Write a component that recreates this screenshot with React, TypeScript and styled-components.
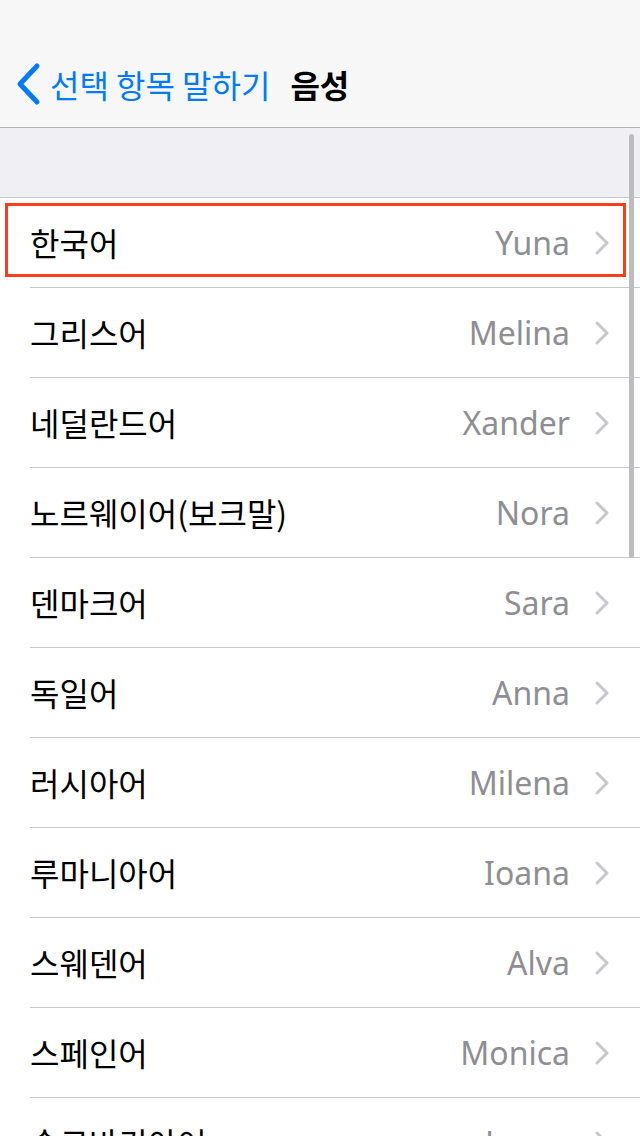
import React from "react";
import styled, { createGlobalStyle } from "styled-components";

const Global = createGlobalStyle`
  html, body { margin: 0; padding: 0; background: #ffffff; }
  body { width: 640px; height: 1136px; overflow: hidden; font-family: "Noto Sans", "Noto Sans CJK KR", sans-serif; }
  #root { width: 640px; height: 1136px; }
`;

const Screen = styled.div`
  position: relative;
  width: 640px;
  height: 1136px;
  overflow: hidden;
  background: #ffffff;
`;

const NavBar = styled.header`
  height: 128px;
  box-sizing: border-box;
  padding-top: 40px;
  background: #f7f7f7;
  border-bottom: 1px solid #b2b2b2;
  display: flex;
  align-items: center;
`;

const BackButton = styled.div`
  display: flex;
  align-items: center;
  padding-left: 16px;
  gap: 8px;
  color: #007aff;
  font-family: "Noto Sans CJK KR", sans-serif;
  font-size: 32px;
  height: 88px;
`;

const Title = styled.div`
  margin-left: 20px;
  font-family: "Noto Sans CJK KR", sans-serif;
  font-size: 32px;
  font-weight: 700;
  color: #000;
`;

const SectionHeader = styled.div`
  height: 69px;
  background: #efeff4;
  border-bottom: 1px solid #c8c7cc;
`;

const List = styled.div`
  display: flex;
  flex-direction: column;
`;

const Row = styled.div`
  position: relative;
  height: 90px;
  display: flex;
  align-items: center;
  padding-left: 30px;
  padding-right: 30px;
  box-sizing: border-box;
  &::after {
    content: "";
    position: absolute;
    left: 30px;
    right: 0;
    bottom: 0;
    height: 1px;
    background: #c8c7cc;
  }
`;

const Label = styled.div`
  flex: 1;
  font-family: "Noto Sans CJK KR", sans-serif;
  font-size: 32px;
  color: #000;
  margin-top: -2px;
  white-space: nowrap;
`;

const Value = styled.div`
  font-family: "Noto Sans", sans-serif;
  font-size: 32px;
  color: #8e8e93;
  margin-right: 24px;
  margin-top: -2px;
`;

const Highlight = styled.div`
  position: absolute;
  left: 5px;
  top: 203px;
  width: 621px;
  height: 74px;
  box-sizing: border-box;
  border: 3px solid #ff3b1e;
  pointer-events: none;
`;

const ScrollBar = styled.div`
  position: absolute;
  left: 629px;
  top: 134px;
  width: 5px;
  height: 424px;
  border-radius: 3px;
  background: #bdbdc0;
`;

const Chevron = () => (
  <svg width="16" height="26" viewBox="0 0 16 26">
    <path d="M3 3 L13 13 L3 23" fill="none" stroke="#c7c7cc" strokeWidth="3" strokeLinecap="round" strokeLinejoin="round" />
  </svg>
);

const BackChevron = () => (
  <svg width="26" height="44" viewBox="0 0 26 44">
    <path d="M21 4 L4 22 L21 40" fill="none" stroke="#007aff" strokeWidth="5" strokeLinecap="round" strokeLinejoin="round" />
  </svg>
);

const rows: [string, string][] = [
  ["한국어", "Yuna"],
  ["그리스어", "Melina"],
  ["네덜란드어", "Xander"],
  ["노르웨이어(보크말)", "Nora"],
  ["덴마크어", "Sara"],
  ["독일어", "Anna"],
  ["러시아어", "Milena"],
  ["루마니아어", "Ioana"],
  ["스웨덴어", "Alva"],
  ["스페인어", "Monica"],
  ["슬로바키아어", "Laura"],
];

export default function App() {
  return (
    <Screen>
      <Global />
      <NavBar>
        <BackButton>
          <BackChevron />
          <span>선택 항목 말하기</span>
        </BackButton>
        <Title>음성</Title>
      </NavBar>
      <SectionHeader />
      <List>
        {rows.map(([l, v]) => (
          <Row key={l}>
            <Label>{l}</Label>
            <Value>{v}</Value>
            <Chevron />
          </Row>
        ))}
      </List>
      <Highlight />
      <ScrollBar />
    </Screen>
  );
}
